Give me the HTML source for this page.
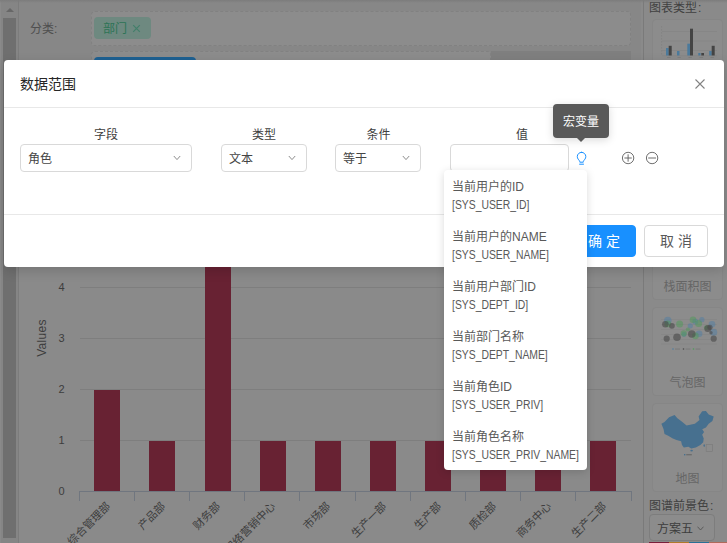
<!DOCTYPE html>
<html lang="zh-CN">
<head>
<meta charset="utf-8">
<title>数据范围</title>
<style>
*{box-sizing:border-box;margin:0;padding:0}
html,body{width:727px;height:543px;overflow:hidden}
body{position:relative;background:#8a8a8a;font-family:"Liberation Sans","Noto Sans CJK SC",sans-serif;font-size:12px;color:#595959}
.abs{position:absolute}
/* ---------- dimmed background page ---------- */
#bg{position:absolute;left:0;top:0;width:727px;height:543px;overflow:hidden}
.sb-track{left:1px;top:0;width:17px;height:543px;background:#858585}
.sb-line{left:18px;top:0;width:1px;height:543px;background:#7c7c7c}
.sb-thumb{left:3px;top:18px;width:13px;height:520px;background:#6f6f6f}
.sb-arrow{left:5.5px;top:8px;width:0;height:0;border-left:4px solid transparent;border-right:4px solid transparent;border-bottom:4px solid #676767}
.topshade{left:0;top:0;width:727px;height:3px;background:linear-gradient(#7c7c7c,rgba(124,124,124,0))}
.lbl{color:#4f4f4f;font-size:12px;line-height:14px;white-space:nowrap}
.dash{border:1px dashed #818181;background:#8c8c8c;border-radius:4px}
.tag{background:#6e8980;border-radius:4px;color:#2d7456;font-size:12px;line-height:22px;white-space:nowrap}
.rp-line{left:643px;top:0;width:1px;height:543px;background:#7a7a7a}
.card{border:1px solid #868686;border-radius:4px;background:#8c8c8c}
.card span{position:absolute;left:0;width:100%;text-align:center;color:#666;font-size:12px;line-height:14px}
/* ---------- modal ---------- */
#modal{left:4px;top:60px;width:720px;height:207px;background:#fff;border-radius:4px;box-shadow:0 4px 12px rgba(0,0,0,.15)}
.title{left:16px;top:14px;font-size:14px;line-height:20px;color:#262626;white-space:nowrap}
.hr{left:0;width:720px;height:1px;background:#e8e8e8}
.fl{font-size:12px;line-height:14px;color:#404040;text-align:center;white-space:nowrap}
.sel{height:28px;border:1px solid #d9d9d9;border-radius:4px;background:#fff;font-size:12px;line-height:28px;padding-left:7px;color:#454545;white-space:nowrap}
.sel svg{position:absolute;right:10px;top:10px}
.btn{top:165px;width:64px;height:32px;border-radius:4px;font-size:14px;line-height:30px;text-align:center;white-space:nowrap}
.btn.p{left:568px;background:#1890ff;border:1px solid #1890ff;color:#fff}
.btn.d{left:640px;background:#fff;border:1px solid #d9d9d9;color:#595959}
/* tooltip */
#tip{left:553px;top:104px;width:56px;height:34px;background:#595959;border-radius:4px;color:#fff;font-size:12px;line-height:37px;text-align:center;white-space:nowrap;box-shadow:0 2px 8px rgba(0,0,0,.15)}
#tip:after{content:"";position:absolute;left:24px;top:34px;border-left:4.5px solid transparent;border-right:4.5px solid transparent;border-top:4.5px solid #595959}
/* dropdown */
#dd{left:444px;top:170px;width:143px;height:300px;background:#fff;border-radius:4px;box-shadow:0 2px 8px rgba(0,0,0,.15)}
#dd .it{height:50px;padding:8px 0 6px 8px;font-size:12px;line-height:18px;color:#595959;white-space:nowrap}
#dd .it i{font-style:normal;display:inline-block;transform:scaleX(.865);transform-origin:0 50%}
</style>
</head>
<body>
<div id="bg">
  <div class="abs sb-track"></div>
  <div class="abs sb-line"></div>
  <div class="abs sb-thumb"></div>
  <div class="abs sb-arrow"></div>

  <div class="abs" style="left:19px;top:0;width:622px;height:120px;background:#878787"></div>
  <div class="abs lbl" style="left:30px;top:22px">分类:</div>
  <div class="abs dash" style="left:91px;top:11px;width:540px;height:35px"></div>
  <div class="abs tag" style="left:94px;top:17px;width:57px;height:22px;padding-left:9px;line-height:24px">部门<svg class="abs" style="left:38px;top:7px" width="9" height="9" viewBox="0 0 9 9"><path d="M1.2 1.2 L7.8 7.8 M7.8 1.2 L1.2 7.8" stroke="#437f6a" stroke-width="1.2" fill="none"/></svg></div>
  <div class="abs dash" style="left:91px;top:51px;width:400px;height:35px"></div>
  <div class="abs" style="left:491px;top:51px;width:140px;height:35px;background:#7f7f7f"></div>
  <div class="abs" style="left:94px;top:57px;width:102px;height:22px;background:#1e6192;border-radius:4px"></div>

  <!-- chart -->
  <svg class="abs" style="left:0;top:0" width="727" height="543" viewBox="0 0 727 543">
    <g stroke="#7e7e7e" stroke-width="1" shape-rendering="crispEdges">
      <line x1="80" y1="287.5" x2="631" y2="287.5"/>
      <line x1="80" y1="338.5" x2="631" y2="338.5"/>
      <line x1="80" y1="389.5" x2="631" y2="389.5"/>
      <line x1="80" y1="440.5" x2="631" y2="440.5"/>
    </g>
    <g fill="#682233">
      <rect x="94" y="390" width="26" height="101"/>
      <rect x="149" y="441" width="26" height="50"/>
      <rect x="205" y="236" width="26" height="255"/>
      <rect x="260" y="441" width="26" height="50"/>
      <rect x="315" y="441" width="26" height="50"/>
      <rect x="370" y="441" width="26" height="50"/>
      <rect x="425" y="441" width="26" height="50"/>
      <rect x="480" y="441" width="26" height="50"/>
      <rect x="535" y="441" width="26" height="50"/>
      <rect x="590" y="441" width="26" height="50"/>
    </g>
    <g stroke="#70767f" stroke-width="1" shape-rendering="crispEdges">
      <line x1="79" y1="491.5" x2="632" y2="491.5"/>
      <line x1="79.5" y1="491" x2="79.5" y2="501"/>
      <line x1="134.5" y1="491" x2="134.5" y2="501"/>
      <line x1="189.5" y1="491" x2="189.5" y2="501"/>
      <line x1="244.5" y1="491" x2="244.5" y2="501"/>
      <line x1="299.5" y1="491" x2="299.5" y2="501"/>
      <line x1="355.5" y1="491" x2="355.5" y2="501"/>
      <line x1="410.5" y1="491" x2="410.5" y2="501"/>
      <line x1="465.5" y1="491" x2="465.5" y2="501"/>
      <line x1="520.5" y1="491" x2="520.5" y2="501"/>
      <line x1="575.5" y1="491" x2="575.5" y2="501"/>
      <line x1="631.5" y1="491" x2="631.5" y2="501"/>
    </g>
    <g font-family="Liberation Sans, Noto Sans CJK SC, sans-serif" font-size="11" fill="#3d3d3d" text-anchor="end">
      <text x="64.5" y="291">4</text>
      <text x="64.5" y="342">3</text>
      <text x="64.5" y="393">2</text>
      <text x="64.5" y="444">1</text>
      <text x="64.5" y="495">0</text>
    </g>
    <text font-family="Liberation Sans, sans-serif" font-size="12" fill="#3d3d3d" text-anchor="middle" transform="translate(46,338) rotate(-90)" letter-spacing="0.3">Values</text>
    <g font-family="Liberation Sans, Noto Sans CJK SC, sans-serif" font-size="11" fill="#3d3d3d" text-anchor="end">
      <text transform="translate(111,507) rotate(-45)">综合管理部</text>
      <text transform="translate(166,507) rotate(-45)">产品部</text>
      <text transform="translate(221,507) rotate(-45)">财务部</text>
      <text transform="translate(276,507) rotate(-45)">网络营销中心</text>
      <text transform="translate(331,507) rotate(-45)">市场部</text>
      <text transform="translate(387,507) rotate(-45)">生产一部</text>
      <text transform="translate(442,507) rotate(-45)">生产部</text>
      <text transform="translate(497,507) rotate(-45)">质检部</text>
      <text transform="translate(552,507) rotate(-45)">商务中心</text>
      <text transform="translate(607,507) rotate(-45)">生产二部</text>
    </g>
  </svg>

  <!-- right panel -->
  <div class="abs rp-line"></div>
  <div class="abs lbl" style="left:649px;top:1px;color:#404040">图表类型<span style="margin-left:1px">:</span></div>
  <div class="abs card" style="left:652px;top:19px;width:71px;height:89px"></div>
  <div class="abs card" style="left:652px;top:115px;width:71px;height:89px"></div>
  <div class="abs card" style="left:652px;top:211px;width:71px;height:89px"><span style="top:68px">栈面积图</span></div>
  <div class="abs card" style="left:652px;top:307px;width:71px;height:89px"><span style="top:68px">气泡图</span></div>
  <div class="abs card" style="left:652px;top:403px;width:71px;height:89px"><span style="top:68px">地图</span></div>
  <svg class="abs" style="left:0;top:0" width="727" height="543" viewBox="0 0 727 543">
    <!-- bar thumbnail -->
    <g stroke="#838383" stroke-width="0.6">
      <line x1="662" y1="31.5" x2="717" y2="31.5"/><line x1="662" y1="41" x2="717" y2="41"/><line x1="662" y1="50.5" x2="717" y2="50.5"/><line x1="662" y1="55.8" x2="717" y2="55.8"/>
      <line x1="661.6" y1="26" x2="661.6" y2="56" stroke-dasharray="1.5 1.5" stroke="#7e7e7e"/>
    </g>
    <g fill="#7d7d7d"><rect x="667" y="57" width="3.6" height="0.9"/><rect x="677.5" y="57" width="3.2" height="0.9"/><rect x="688.5" y="57" width="3.2" height="0.9"/><rect x="699.5" y="57" width="3.6" height="0.9"/><rect x="710.5" y="57" width="3.4" height="0.9"/></g>
    <g fill="#4b7a9c">
      <rect x="666" y="48" width="2.7" height="7.5"/>
      <rect x="677" y="51" width="2.5" height="4.5"/>
      <rect x="687.3" y="43.7" width="2.7" height="11.8"/>
      <rect x="698.3" y="53" width="2.2" height="2.5"/>
      <rect x="709.2" y="51" width="2.5" height="4.5"/>
    </g>
    <g fill="#444">
      <rect x="668.7" y="45.8" width="3" height="9.7"/>
      <rect x="690" y="28.7" width="3" height="26.8"/>
      <rect x="701.3" y="53" width="2.7" height="2.5"/>
      <rect x="711.7" y="45.8" width="3" height="9.7"/>
    </g>
    <!-- bubble thumbnail -->
    <g stroke="#848484" stroke-width="0.6">
      <line x1="661" y1="319.5" x2="717" y2="319.5"/><line x1="661" y1="324.5" x2="717" y2="324.5"/><line x1="661" y1="329.5" x2="717" y2="329.5"/><line x1="661" y1="334.5" x2="717" y2="334.5"/><line x1="661" y1="339.5" x2="717" y2="339.5"/><line x1="661" y1="344" x2="717" y2="344"/>
    </g>
    <g><circle cx="673" cy="349" r="0.8" fill="#4f7da3"/><rect x="675" y="348.6" width="5" height="0.9" fill="#777"/><circle cx="683.5" cy="349" r="0.8" fill="#4a4a4a"/><rect x="685.5" y="348.6" width="5" height="0.9" fill="#777"/><circle cx="693.5" cy="349" r="0.8" fill="#4d9a58"/><rect x="695.5" y="348.6" width="5" height="0.9" fill="#777"/></g>
    <g fill="#4f7da3" fill-opacity=".5">
      <circle cx="667.8" cy="320.6" r="3.8"/><circle cx="690.3" cy="325.8" r="2.6"/><circle cx="695.3" cy="321.7" r="2.9"/>
      <circle cx="701.9" cy="319.7" r="2.6"/><circle cx="699.1" cy="333.7" r="3.3"/><circle cx="712" cy="324.3" r="3.3"/>
      <circle cx="713.7" cy="332.2" r="3.5"/><circle cx="684" cy="334.5" r="2.4"/>
    </g>
    <g fill="#4d9a58" fill-opacity=".5">
      <circle cx="667.8" cy="323.9" r="3.3"/><circle cx="679.6" cy="323.9" r="3.5"/><circle cx="683.8" cy="333.3" r="3.1"/>
      <circle cx="687.9" cy="329.5" r="2.1"/><circle cx="693" cy="319.7" r="3.3"/><circle cx="698.6" cy="323.6" r="3.5"/>
      <circle cx="695.4" cy="335.9" r="3.3"/><circle cx="706.3" cy="327.6" r="2.4"/>
    </g>
    <g fill="#4a4a4a" fill-opacity=".62">
      <circle cx="665.4" cy="324.3" r="3.3"/><circle cx="671.9" cy="325.8" r="2.9"/><circle cx="666.7" cy="338.7" r="3.1"/>
      <circle cx="677" cy="337.2" r="3.8"/><circle cx="691.8" cy="334" r="3.8"/><circle cx="707.8" cy="328.5" r="3.5"/>
      <circle cx="710" cy="327.3" r="2.6"/><circle cx="713.7" cy="338.7" r="3.1"/><circle cx="711" cy="332.8" r="1.7"/>
    </g>
    <!-- china map thumbnail -->
    <path fill="#47708f" d="M661.4 423.8 L664.5 421.9 L669.1 417.3 L674.6 414.9 L677.4 418.3 L681.1 421 L686.6 425.6 L694.9 423.8 L699.5 420.1 L698.6 416.4 L702.2 411.3 L705.9 410.9 L708.7 414.6 L713.7 416.4 L712.4 421 L708.7 423.8 L705.9 427.5 L702.2 429.3 L704.1 432.1 L702.2 434.8 L703.7 438.5 L703.2 442.2 L700.4 445 L695.8 447.4 L691.2 448.6 L688.4 446.8 L683.8 447.4 L682 445 L681.1 441.3 L676.5 440 L672.8 438.5 L668.2 435.8 L664.5 433.9 L663.6 429.3 Z"/>
    <ellipse cx="691.6" cy="450.6" rx="1.3" ry="0.9" fill="#47708f"/>
    <ellipse cx="704.2" cy="445.6" rx="0.7" ry="1.4" fill="#47708f"/>
    <rect x="706.2" y="444.4" width="6.2" height="7" fill="none" stroke="#7a7a7a" stroke-width="0.6"/>
    <rect x="684" y="454" width="1.4" height="1.4" fill="#47708f"/>
    <rect x="686.2" y="454.2" width="5.6" height="1.1" fill="#666"/>
  </svg>
  <div class="abs lbl" style="left:649px;top:499px;color:#404040">图谱前景色<span style="margin-left:1px">:</span></div>
  <div class="abs" style="left:649px;top:514px;width:66px;height:27px;border:1px solid #7d7d7d;border-radius:4px;background:#8c8c8c;color:#3d3d3d;font-size:12px;line-height:28px;padding-left:7px;white-space:nowrap">方案五<svg class="abs" style="left:47px;top:10.5px" width="7" height="5" viewBox="0 0 7 5"><path d="M0.5 0.7 L3.5 4 L6.5 0.7" stroke="#555" stroke-width="0.9" fill="none"/></svg></div>
  <div class="abs" style="left:649px;top:542px;width:20px;height:1px;background:#7a1f3a"></div>
  <div class="abs" style="left:669px;top:542px;width:20px;height:1px;background:#b07a2a"></div>
  <div class="abs" style="left:689px;top:542px;width:20px;height:1px;background:#2a6f95"></div>
  <div class="abs" style="left:709px;top:542px;width:18px;height:1px;background:#b06a5a"></div>
  <div class="abs topshade"></div>
</div>

<div id="modal" class="abs">
  <div class="abs title">数据范围</div>
  <svg class="abs" style="left:690px;top:18px" width="12" height="12" viewBox="0 0 12 12"><path d="M1.5 1.5 L10.5 10.5 M10.5 1.5 L1.5 10.5" stroke="#828282" stroke-width="1.1" fill="none"/></svg>
  <div class="abs hr" style="top:47px"></div>

  <div class="abs fl" style="left:16px;top:68px;width:172px">字段</div>
  <div class="abs fl" style="left:217px;top:68px;width:86px">类型</div>
  <div class="abs fl" style="left:331px;top:68px;width:87px">条件</div>
  <div class="abs fl" style="left:446px;top:68px;width:144px">值</div>

  <div class="abs sel" style="left:16px;top:84px;width:172px">角色<svg width="8" height="6" viewBox="0 0 8 6"><path d="M0.8 1 L4 4.6 L7.2 1" stroke="#8c8c8c" stroke-width="1" fill="none"/></svg></div>
  <div class="abs sel" style="left:217px;top:84px;width:86px">文本<svg width="8" height="6" viewBox="0 0 8 6"><path d="M0.8 1 L4 4.6 L7.2 1" stroke="#8c8c8c" stroke-width="1" fill="none"/></svg></div>
  <div class="abs sel" style="left:331px;top:84px;width:86px">等于<svg width="8" height="6" viewBox="0 0 8 6"><path d="M0.8 1 L4 4.6 L7.2 1" stroke="#8c8c8c" stroke-width="1" fill="none"/></svg></div>
  <div class="abs sel" style="left:446px;top:84px;width:119px"></div>

  <!-- bulb -->
  <svg class="abs" style="left:571px;top:91px" width="14" height="15" viewBox="0 0 14 15"><path d="M6.55 1.3 C4.2 1.3 2.3 3.2 2.3 5.5 C2.3 7.6 3.6 8.6 4.3 9.6 C4.7 10.2 4.8 10.6 4.8 11.2 L8.3 11.2 C8.3 10.6 8.4 10.2 8.8 9.6 C9.5 8.6 10.8 7.6 10.8 5.5 C10.8 3.2 8.9 1.3 6.55 1.3 Z M4.6 13.2 L8.5 13.2" stroke="#1890ff" stroke-width="1" fill="none" stroke-linecap="round" stroke-linejoin="round"/></svg>
  <!-- plus / minus -->
  <svg class="abs" style="left:617px;top:91.3px" width="14" height="14" viewBox="0 0 14 14"><circle cx="7.1" cy="7" r="5.7" stroke="#5f5f5f" stroke-width="0.9" fill="none"/><path d="M3.4 7 H10.8 M7.1 3.3 V10.7" stroke="#5f5f5f" stroke-width="0.9"/></svg>
  <svg class="abs" style="left:641px;top:91.3px" width="14" height="14" viewBox="0 0 14 14"><circle cx="7.1" cy="7" r="5.7" stroke="#5f5f5f" stroke-width="0.9" fill="none"/><path d="M3.2 7 H11" stroke="#5f5f5f" stroke-width="0.9"/></svg>

  <div class="abs hr" style="top:154px"></div>
  <div class="abs btn p">确 定</div>
  <div class="abs btn d">取 消</div>
</div>

<div id="tip" class="abs">宏变量</div>

<div id="dd" class="abs">
  <div class="it">当前用户的ID<br><i>[SYS_USER_ID]</i></div>
  <div class="it">当前用户的NAME<br><i>[SYS_USER_NAME]</i></div>
  <div class="it">当前用户部门ID<br><i>[SYS_DEPT_ID]</i></div>
  <div class="it">当前部门名称<br><i>[SYS_DEPT_NAME]</i></div>
  <div class="it">当前角色ID<br><i>[SYS_USER_PRIV]</i></div>
  <div class="it">当前角色名称<br><i>[SYS_USER_PRIV_NAME]</i></div>
</div>
</body>
</html>
